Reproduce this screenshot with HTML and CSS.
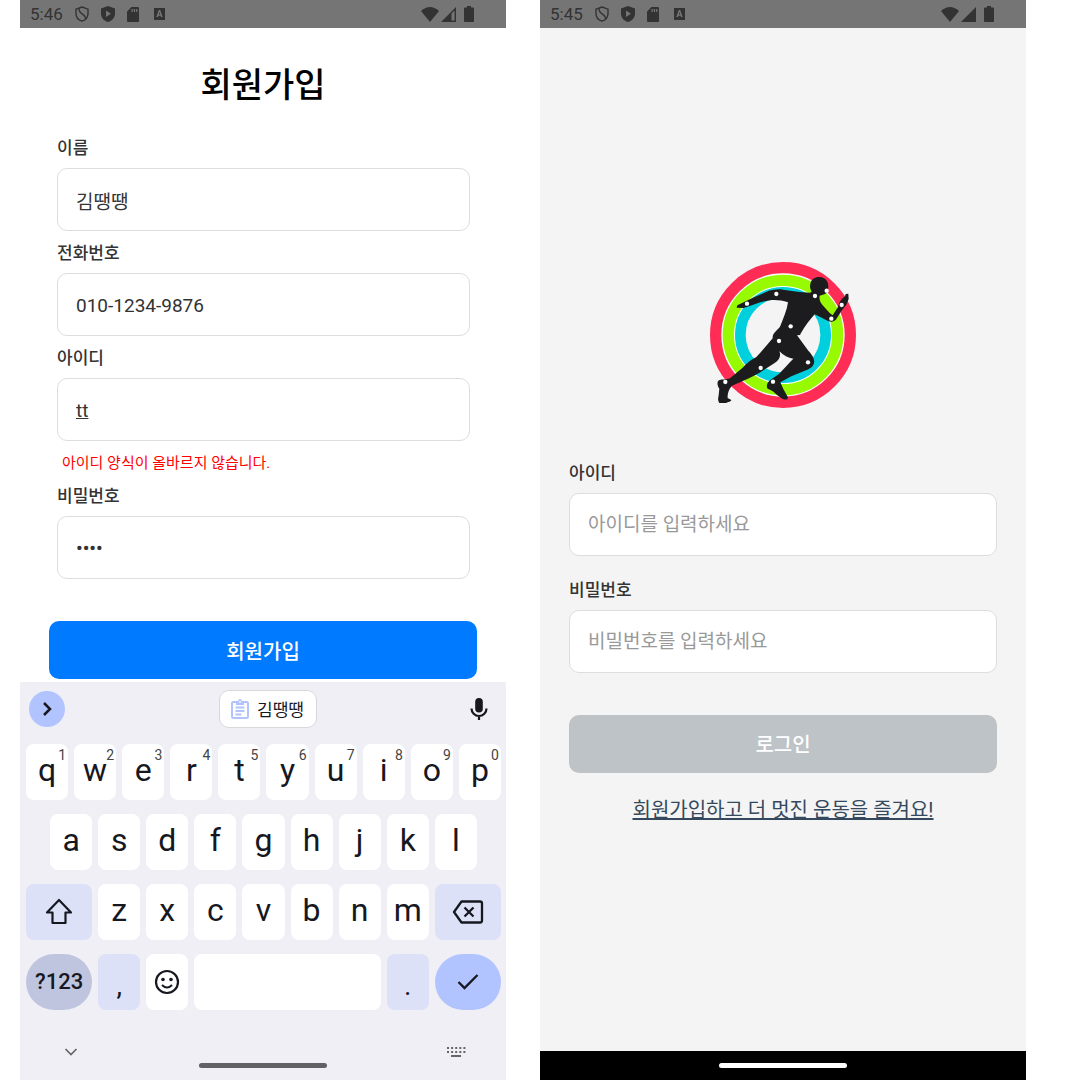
FILE: index.html
```html
<!DOCTYPE html>
<html lang="ko">
<head>
<meta charset="utf-8">
<meta name="viewport" content="width=device-width, initial-scale=1">
<title>회원가입 / 로그인</title>
<link rel="stylesheet" href="styles.css">
</head>
<body>
<svg class="symbols" aria-hidden="true">
  <symbol id="shield-outline" viewBox="0 0 14 16"><path d="M7 1 13 3.200V7.500C13 11 10.500 14 7 15.200 3.500 14 1 11 1 7.500V3.200Z M4 2.200C3.500 9 10.500 6.500 10.500 13" fill="none" stroke="#333" stroke-width="1.400"/></symbol>
  <symbol id="shield-play" viewBox="0 0 14 16"><path fill-rule="evenodd" d="M7 0 14 2.500V7.500C14 11.500 11 15 7 16 3 15 0 11.500 0 7.500V2.500Z M5 4.500V11L10 7.700Z" fill="#333"/></symbol>
  <symbol id="sd" viewBox="0 0 12 15"><path fill-rule="evenodd" d="M4.500 0H11Q12 0 12 1V14Q12 15 11 15H1Q0 15 0 14V4.500Z M4.500 2V5H5.800V2Z M6.800 2V5H8.100V2Z M9.100 2V5H10.400V2Z" fill="#333"/></symbol>
  <symbol id="abox" viewBox="0 0 11 12"><path fill-rule="evenodd" d="M0 0H11V12H0Z M4.800 2 2.300 9H4L4.400 7.700H6.600L7 9H8.700L6.200 2Z M5.500 4 6.200 6.500H4.800Z" fill="#333"/></symbol>
  <symbol id="wifi" viewBox="0 0 18 15"><path d="M0 4Q9-4 18 4L9 15Z" fill="#333"/></symbol>
  <symbol id="signal-part" viewBox="0 0 15 15"><path fill-rule="evenodd" d="M15 0V15H0Z M10.500 6.500V13.600H13.600V3.400Z" fill="#333"/></symbol>
  <symbol id="signal-full" viewBox="0 0 15 15"><path d="M15 0V15H0Z" fill="#333"/></symbol>
  <symbol id="battery" viewBox="0 0 10 16"><path d="M3 0H7V1.500H9Q10 1.500 10 2.500V15Q10 16 9 16H1Q0 16 0 15V2.500Q0 1.500 1 1.500H3Z" fill="#333"/></symbol>
</svg>
<main class="screens">
  <section class="screen signup">
    <header class="status">
      <span class="time">5:46</span>
      <svg class="st-shield"><use href="#shield-outline"/></svg>
      <svg class="st-shield"><use href="#shield-play"/></svg>
      <svg class="st-sd"><use href="#sd"/></svg>
      <svg class="st-abox"><use href="#abox"/></svg>
      <span class="system">
        <svg class="st-wifi"><use href="#wifi"/></svg>
        <svg class="st-signal"><use href="#signal-part"/></svg>
        <svg class="st-battery"><use href="#battery"/></svg>
      </span>
    </header>
    <form class="signup-form">
      <h1>회원가입</h1>
      <div class="fields">
        <label for="name">이름</label>
        <input id="name" type="text" value="김땡땡">
        <label for="phone">전화번호</label>
        <input id="phone" type="tel" value="010-1234-9876">
        <label for="uid">아이디</label>
        <input id="uid" class="composing" type="text" value="tt" spellcheck="false">
        <p class="error">아이디 양식이 올바르지 않습니다.</p>
        <label for="pw">비밀번호</label>
        <input id="pw" class="secret" type="password" value="test">
      </div>
      <button class="submit primary" type="button">회원가입</button>
    </form>
    <div class="keyboard">
      <div class="toolbar">
        <button class="expand" type="button" aria-label="펼치기"><svg width="12" height="16" viewBox="0 0 12 16"><path d="M3 2 9 8 3 14" fill="none" stroke="#17181f" stroke-width="2.500"/></svg></button>
        <button class="chip" type="button"><svg width="18" height="20" viewBox="0 0 18 20"><g fill="none" stroke="#b2c4ff" stroke-width="2"><rect x="1" y="3" width="16" height="16" rx="1.500"/><path d="M4.500 8.500H13.500M4.500 12H13.500M4.500 15.500H10.500"/></g><path d="M5 2H7A2 2 0 0 1 11 2H13V6H5Z" fill="#b2c4ff"/><circle cx="9" cy="2.700" r="1" fill="#fff"/></svg>김땡땡</button>
        <button class="mic" type="button" aria-label="음성 입력"><svg width="18" height="24" viewBox="0 0 18 24"><rect x="5.200" y="1" width="7.600" height="14.500" rx="3.800" fill="#17181f"/><path d="M1.500 11.500A7.500 7.500 0 0 0 16.500 11.500M9 19V23" fill="none" stroke="#17181f" stroke-width="2.200"/></svg></button>
      </div>
      <div class="keys">
        <button type="button">q<sup>1</sup></button><button type="button">w<sup>2</sup></button><button type="button">e<sup>3</sup></button><button type="button">r<sup>4</sup></button><button type="button">t<sup>5</sup></button><button type="button">y<sup>6</sup></button><button type="button">u<sup>7</sup></button><button type="button">i<sup>8</sup></button><button type="button">o<sup>9</sup></button><button type="button">p<sup>0</sup></button>
        <button class="home-start" type="button">a</button><button type="button">s</button><button type="button">d</button><button type="button">f</button><button type="button">g</button><button type="button">h</button><button type="button">j</button><button type="button">k</button><button type="button">l</button>
        <button class="wide tint row-start" type="button" aria-label="Shift"><svg width="28" height="28" viewBox="0 0 28 28"><path d="M14 2 26 14.500H20.500V25H7.500V14.500H2Z" fill="none" stroke="#17181f" stroke-width="2.200" stroke-linejoin="round"/></svg></button><button type="button">z</button><button type="button">x</button><button type="button">c</button><button type="button">v</button><button type="button">b</button><button type="button">n</button><button type="button">m</button><button class="wide tint" type="button" aria-label="지우기"><svg width="32" height="24" viewBox="0 0 32 24"><path d="M9.500 1.500H28Q30 1.500 30 3.500V20.500Q30 22.500 28 22.500H9.500L2 12Z M12.500 7.500 21.500 16.500M21.500 7.500 12.500 16.500" fill="none" stroke="#17181f" stroke-width="2.300" stroke-linejoin="round"/></svg></button>
        <button class="wide round symbols-key" type="button">?123</button><button class="tint punct" type="button">,</button><button type="button" aria-label="이모티콘"><svg width="26" height="26" viewBox="0 0 26 26"><circle cx="13" cy="13" r="11" fill="none" stroke="#17181f" stroke-width="2.200"/><circle cx="9" cy="10.500" r="1.800" fill="#17181f"/><circle cx="17" cy="10.500" r="1.800" fill="#17181f"/><path d="M8 16Q13 21 18 16" fill="none" stroke="#17181f" stroke-width="2"/></svg></button><button class="space" type="button" aria-label="스페이스"></button><button class="tint punct" type="button">.</button><button class="wide round enter" type="button" aria-label="완료"><svg width="24" height="20" viewBox="0 0 24 20"><path d="M2.500 10 8.500 16 21.500 3" fill="none" stroke="#17181f" stroke-width="2.300"/></svg></button>
      </div>
      <footer class="kb-nav">
        <button class="hide" type="button" aria-label="키보드 숨기기"><svg width="14" height="10" viewBox="0 0 14 10"><path d="M1.500 2 7 7.500 12.500 2" fill="none" stroke="#666" stroke-width="1.700"/></svg></button>
        <span class="pill"></span>
        <button class="switch" type="button" aria-label="키보드 전환"><svg width="20" height="12" viewBox="0 0 20 12"><path d="M1 2H20M1 6H20" stroke="#666" stroke-width="2" stroke-dasharray="2 2.100"/><path d="M5 10H15" stroke="#666" stroke-width="2"/></svg></button>
      </footer>
    </div>
  </section>

  <section class="screen login">
    <header class="status">
      <span class="time">5:45</span>
      <svg class="st-shield"><use href="#shield-outline"/></svg>
      <svg class="st-shield"><use href="#shield-play"/></svg>
      <svg class="st-sd"><use href="#sd"/></svg>
      <svg class="st-abox"><use href="#abox"/></svg>
      <span class="system">
        <svg class="st-wifi"><use href="#wifi"/></svg>
        <svg class="st-signal"><use href="#signal-full"/></svg>
        <svg class="st-battery"><use href="#battery"/></svg>
      </span>
    </header>
    <form class="login-form">
      <svg class="logo" viewBox="30 30 438 438" role="img" aria-label="달리는 사람">
        <g fill="none">
          <circle cx="249" cy="249" r="184" stroke="#fff" stroke-width="8"/>
          <circle cx="249" cy="249" r="146" stroke="#fff" stroke-width="8"/>
          <circle cx="249" cy="249" r="202" stroke="#ff2d55" stroke-width="34"/>
          <circle cx="249" cy="249" r="164" stroke="#98fa00" stroke-width="34"/>
          <circle cx="249" cy="249" r="128" stroke="#00d0de" stroke-width="32"/>
        </g>
        <path fill="#1c1c1e" d="M331 96C334 80 346 74 360 75 376 76 385 88 385 103 385 115 382 124 373 127L359 131C357 142 361 152 368 160L389 183 398 190 414 165C417 151 424 140 435 133L437 126 445 125 446 141 439 158C433 166 428 171 424 177L411 198C405 209 394 212 384 207L344 187C330 203 314 223 303 243L300 249 291 250 325 296C336 307 345 322 342 333 339 345 331 349 322 353L274 373 241 391 250 411 263 434C266 442 258 445 248 441L232 430C225 422 215 414 203 410 197 400 203 389 214 382L236 367C251 350 267 334 280 320 264 319 250 309 238 298 244 312 238 324 224 333L190 355C164 373 129 387 95 402 86 412 82 426 83 438L94 444C93 449 84 450 78 453H58C53 447 54 438 56 430L58 410C52 403 50 388 57 385 66 381 80 384 90 379L127 348C142 332 155 322 169 315 187 296 202 278 218 259 217 243 230 236 240 224 250 200 261 174 264 151 248 145 229 143 215 144L183 150 147 163 130 168 110 167 112 160 134 149 157 138 198 120C212 114 233 110 249 113L298 120 330 122 335 119C331 112 329 105 331 96Z"/>
        <g fill="#fff">
          <circle cx="229" cy="126" r="6.500"/><circle cx="141" cy="155" r="6.500"/><circle cx="345" cy="132" r="6.500"/><circle cx="380" cy="116" r="6.500"/><circle cx="425" cy="159" r="6.500"/><circle cx="394" cy="200" r="6.500"/><circle cx="272" cy="223" r="6.500"/><circle cx="237" cy="267" r="6.500"/><circle cx="324" cy="331" r="6.500"/><circle cx="182" cy="348" r="6.500"/><circle cx="219" cy="389" r="6.500"/><circle cx="76" cy="390" r="6.500"/>
        </g>
      </svg>
      <label for="login-id">아이디</label>
      <input id="login-id" type="text" placeholder="아이디를 입력하세요">
      <label for="login-pw">비밀번호</label>
      <input id="login-pw" type="password" placeholder="비밀번호를 입력하세요">
      <button class="submit muted" type="button">로그인</button>
      <a class="join" href="#signup">회원가입하고 더 멋진 운동을 즐겨요!</a>
    </form>
    <footer class="system-nav"><span class="pill"></span></footer>
  </section>
</main>
</body>
</html>
```
FILE: styles.css
```css
* { box-sizing: border-box; }

body {
  margin: 0;
  background: #fff;
  color: #333;
  font-family: Roboto, "Noto Sans CJK KR", sans-serif;
}

button, input { font: inherit; color: inherit; }
button { border: 0; padding: 0; background: none; }
svg { display: block; flex: none; }
.symbols { position: absolute; width: 0; height: 0; }

.screens {
  display: grid;
  grid-template-columns: 1fr 1fr;
  gap: 34px;
  min-height: 100vh;
  padding: 0 54px 0 20px;
}
.screen { display: flex; flex-direction: column; min-width: 0; }
.login { background: #f4f4f4; }

/* Status bar */
.status {
  display: flex;
  align-items: center;
  gap: 12px;
  height: 28px;
  padding: 0 32px 0 10px;
  background: #757575;
}
.time { font-size: 17px; line-height: 28px; }
.system { display: flex; align-items: center; gap: 2px; margin-left: auto; }
.st-shield { width: 14px; height: 16px; }
.st-sd { width: 12px; height: 15px; }
.st-abox { width: 11px; height: 12px; margin-left: 3px; }
.st-wifi { width: 18px; height: 15px; }
.st-signal { width: 15px; height: 15px; }
.st-battery { width: 10px; height: 16px; margin-left: 6px; }

/* Forms */
h1 {
  margin: 0;
  color: #000;
  font-size: 34px;
  font-weight: 500;
  line-height: 50px;
  text-align: center;
}
label {
  display: block;
  margin: 10px 0 8px;
  font-size: 17px;
  font-weight: 500;
  line-height: 24px;
}
input {
  display: block;
  width: 100%;
  height: 63px;
  padding: 1px 18px 0;
  border: 1px solid #ddd;
  border-radius: 10px;
  background: #fff;
  font-size: 19px;
}
input::placeholder { color: #999; opacity: 1; line-height: 30px; }
.composing { text-decoration: underline; }
.secret { font-weight: 500; }
.error {
  margin: 11px 5px 0;
  color: #f00;
  font-size: 15px;
  line-height: 22px;
}
.submit {
  display: block;
  width: 100%;
  height: 58px;
  border-radius: 10px;
  color: #fff;
  font-size: 20px;
  font-weight: 500;
}
.primary { background: #007aff; }
.muted { background: #bdc3c7; }

.signup-form { padding: 32px 29px 3px; }
.fields { padding: 16px 7px 42px 8px; }

.login-form {
  display: flex;
  flex: 1;
  flex-direction: column;
  justify-content: center;
  padding: 6px 29px 0;
}
.logo { align-self: center; width: 146px; height: 146px; margin-bottom: 43px; }
.login-form input + label { margin-top: 22px; }
.login-form .submit { margin-top: 42px; }
.join {
  align-self: center;
  margin-top: 23px;
  color: #34495e;
  font-size: 20px;
  line-height: 28px;
}

/* Keyboard */
.keyboard { margin-top: auto; background: #f0eff6; color: #17181f; }
.toolbar {
  display: grid;
  grid-template-columns: 1fr auto 1fr;
  align-items: center;
  height: 53px;
  padding: 0 18px 0 9px;
}
.expand {
  display: grid;
  place-items: center;
  width: 36px;
  height: 36px;
  border-radius: 50%;
  background: #b2c4ff;
}
.chip {
  display: flex;
  align-items: center;
  gap: 8px;
  height: 38px;
  margin-left: 19px;
  padding: 0 12px 0 11px;
  border: 1px solid #d8d8dd;
  border-radius: 10px;
  background: #fff;
  font-size: 17px;
}
.mic { justify-self: end; }

.keys {
  display: grid;
  grid-template-columns: repeat(20, 1fr);
  grid-auto-rows: 56px;
  row-gap: 14px;
  padding: 9px 2px 0 3px;
}
.keys button {
  position: relative;
  display: flex;
  grid-column: span 2;
  align-items: center;
  justify-content: center;
  min-width: 0;
  margin: 0 3px;
  padding-bottom: 4px;
  border-radius: 8px;
  background: #fff;
  font-size: 32px;
  line-height: 40px;
}
.keys sup {
  position: absolute;
  top: 3px;
  right: 2px;
  color: #444;
  font-size: 14px;
  line-height: 16px;
}
.keys .home-start { grid-column: 2 / span 2; }
.keys .wide { grid-column: span 3; }
.keys .row-start { grid-column: 1 / span 3; }
.keys .space { grid-column: span 8; }
.keys .tint { background: #dde1f8; }
.keys button:has(svg) { padding-bottom: 0; }
.keys .round { border-radius: 28px; }
.keys .symbols-key {
  padding-bottom: 0;
  background: #bfc5df;
  font-size: 22px;
  font-weight: 500;
}
.keys .enter { background: #b2c4ff; }
.keys .punct { padding: 8px 0 0; font-size: 28px; }

.kb-nav {
  display: grid;
  grid-template-columns: 1fr 128px 1fr;
  height: 70px;
  padding: 32px 40px 0;
}
.kb-nav button { display: grid; place-items: center; height: 20px; }
.kb-nav .hide { width: 22px; }
.kb-nav .switch { justify-self: end; }
.pill {
  width: 128px;
  height: 5px;
  border-radius: 3px;
  background: #616064;
}
.kb-nav .pill { align-self: center; margin-top: 8px; }

.system-nav {
  display: grid;
  place-items: center;
  height: 29px;
  background: #000;
}
.system-nav .pill { background: #fff; }
```
